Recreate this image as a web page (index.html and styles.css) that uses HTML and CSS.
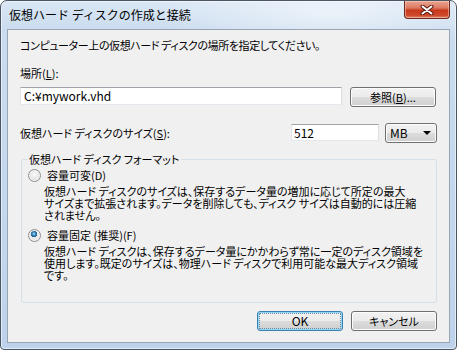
FILE: index.html
```html
<!DOCTYPE html>
<html lang="ja">
<head>
    <meta charset="UTF-8">
    <title>仮想ハード ディスクの作成と接続</title>
    <link rel="stylesheet" href="styles.css">
</head>
<body>
    <div class="window">
        <div class="titlebar">
            <span class="title">仮想ハード ディスクの作成と接続</span>
            <button class="close-btn" aria-label="閉じる">
                <svg width="14" height="10" viewBox="0 0 14 10">
                    <path d="M2.5 1.5 L11.5 8.5 M11.5 1.5 L2.5 8.5" stroke="#5a1b10" stroke-width="4" stroke-linecap="round"/>
                    <path d="M2.5 1.5 L11.5 8.5 M11.5 1.5 L2.5 8.5" stroke="#fff" stroke-width="2" stroke-linecap="round"/>
                </svg>
            </button>
        </div>

        <div class="client">
            <p class="intro">コンピューター上の仮想ハード ディスクの場所を指定してください。</p>

            <div class="field-label">場所(<u>L</u>):</div>
            <div class="path-row">
                <div class="textbox path">C:¥mywork.vhd</div>
                <button class="btn browse">参照(<u>B</u>)...</button>
            </div>

            <div class="size-row">
                <span class="size-label">仮想ハード ディスクのサイズ(<u>S</u>):</span>
                <div class="textbox size">512</div>
                <div class="combo">
                    <span>MB</span>
                    <span class="arrow"></span>
                </div>
            </div>

            <fieldset class="group">
                <legend>仮想ハード ディスク フォーマット</legend>

                <div class="option">
                    <span class="radio"></span>
                    <span class="option-text">容量可変(D)</span>
                </div>
                <p class="desc">仮想ハード ディスクのサイズは、保存するデータ量の増加に応じて所定の最大<br>サイズまで拡張されます。データを削除しても、ディスク サイズは自動的には圧縮<br>されません。</p>

                <div class="option second">
                    <span class="radio checked"></span>
                    <span class="option-text">容量固定 (推奨)(F)</span>
                </div>
                <p class="desc">仮想ハード ディスクは、保存するデータ量にかかわらず常に一定のディスク領域を<br>使用します。既定のサイズは、物理ハード ディスクで利用可能な最大ディスク領域<br>です。</p>
            </fieldset>

            <div class="actions">
                <button class="btn default">OK</button>
                <button class="btn">キャンセル</button>
            </div>
        </div>
    </div>
</body>
</html>
```

FILE: styles.css
```css
* {
    margin: 0;
    padding: 0;
    box-sizing: border-box;
}

body {
    background: #fff;
    font-family: "Noto Sans CJK JP", "Noto Sans", sans-serif;
    font-size: 11px;
    color: #000;
}

.window {
    width: 457px;
    height: 350px;
    border: 1px solid #4a5664;
    border-radius: 7px 7px 4px 4px;
    padding: 0 6px 6px;
    background:
        radial-gradient(ellipse 180px 40px at 330px 12px, rgba(255, 255, 255, 0.55), rgba(255, 255, 255, 0)),
        linear-gradient(to bottom, #dae7f5 0, #cadcef 30px, #bed3eb 100%);
    box-shadow: inset 0 0 0 1px rgba(255, 255, 255, 0.55);
}

/* title bar */
.titlebar {
    display: flex;
    align-items: flex-start;
    height: 28px;
}

.title {
    margin-left: 2px;
    padding-top: 7px;
    font-size: 12px;
    line-height: 14px;
    white-space: nowrap;
}

.close-btn {
    margin-left: auto;
    width: 46px;
    height: 18px;
    border: 1px solid #6b2a20;
    border-top: none;
    border-radius: 0 0 4px 4px;
    background: linear-gradient(to bottom, #e9a592 0, #dc7a63 40%, #c8391c 55%, #cf4a2c 85%, #e08a6f 100%);
    box-shadow: inset 0 0 0 1px rgba(255, 210, 195, 0.5);
    display: flex;
    align-items: center;
    justify-content: center;
}

/* client area */
.client {
    height: 314px;
    border: 1px solid #97a5b5;
    background: #f0f0f0;
    padding: 8px 12px 0 12px;
}

.intro {
    line-height: 14px;
    letter-spacing: -0.4px;
    font-feature-settings: "palt";
    white-space: nowrap;
}

.field-label {
    margin-top: 14px;
    line-height: 14px;
    font-feature-settings: "palt";
}

.path-row {
    display: flex;
    align-items: flex-start;
    gap: 8px;
    margin-top: 7px;
}

.textbox {
    background: #fff;
    border: 1px solid #abadb3;
    border-top-color: #a0a3aa;
    border-left-color: #e2e3ea;
    border-right-color: #dbdfe6;
    border-bottom-color: #e3e9ef;
    font-size: 12px;
    line-height: 16px;
    white-space: nowrap;
}

.path {
    width: 322px;
    height: 18px;
    padding-left: 3px;
}

.size-row {
    display: flex;
    align-items: center;
    margin-top: 16px;
    height: 19px;
}

.size-label {
    font-feature-settings: "palt";
    line-height: 14px;
    white-space: nowrap;
}

.size {
    margin-left: auto;
    width: 88px;
    height: 17px;
    line-height: 15px;
    padding-left: 2px;
}

.combo {
    margin-left: 6px;
    width: 52px;
    height: 20px;
    border: 1px solid #707070;
    border-radius: 3px;
    background: linear-gradient(to bottom, #f2f2f2 0, #ebebeb 50%, #dddddd 50%, #cfcfcf 100%);
    box-shadow: inset 0 0 0 1px #fcfcfc;
    display: flex;
    align-items: center;
    justify-content: space-between;
    padding: 0 5px 0 4px;
    font-size: 12px;
    line-height: 14px;
}

.arrow {
    width: 0;
    height: 0;
    border-left: 4px solid transparent;
    border-right: 4px solid transparent;
    border-top: 4px solid #000;
}

/* buttons */
.btn {
    font: inherit;
    color: #000;
    width: 86px;
    height: 20px;
    border: 1px solid #707070;
    border-radius: 3px;
    background: linear-gradient(to bottom, #f2f2f2 0, #ebebeb 50%, #dddddd 50%, #cfcfcf 100%);
    box-shadow: inset 0 0 0 1px #fcfcfc;
    line-height: 16px;
    font-feature-settings: "palt";
}

.btn.default {
    font-size: 12px;
    border-color: #3c7fb1;
    box-shadow: inset 0 0 0 1px #8fd6f8;
    outline: 1px dotted #6a8ba8;
    outline-offset: -3px;
}

/* group box */
.group {
    margin-top: 10px;
    margin-left: 1px;
    border: 1px solid #d5dfe5;
    border-radius: 3px;
    padding: 2px 10px 21px 6px;
}

.group legend {
    margin-left: -1px;
    padding: 0 2px;
    line-height: 14px;
    font-feature-settings: "palt";
}

.option {
    display: flex;
    align-items: center;
    height: 14px;
}

.option.second {
    margin-top: 7px;
}

.option-text {
    margin-left: 6px;
    line-height: 14px;
}

.radio {
    width: 13px;
    height: 13px;
    border-radius: 50%;
    border: 1px solid #8e8f8f;
    background: radial-gradient(circle at 50% 40%, #fbfbfb 0, #e6e6e6 55%, #d4d4d4 100%);
    box-shadow: inset 0 0 0 1px #f4f4f4;
    flex-shrink: 0;
}

.radio.checked {
    background:
        radial-gradient(circle at 45% 35%, #b9e2fb 0, #3c8cc2 1.6px, #1c5a85 3.2px, rgba(28, 90, 133, 0) 3.4px),
        radial-gradient(circle at 50% 40%, #fbfbfb 0, #e6e6e6 55%, #d4d4d4 100%);
}

.desc {
    margin-top: 3px;
    padding-left: 16px;
    line-height: 12px;
    font-feature-settings: "palt";
    white-space: nowrap;
}

.actions {
    display: flex;
    justify-content: flex-end;
    gap: 8px;
    margin-top: 8px;
}
```
